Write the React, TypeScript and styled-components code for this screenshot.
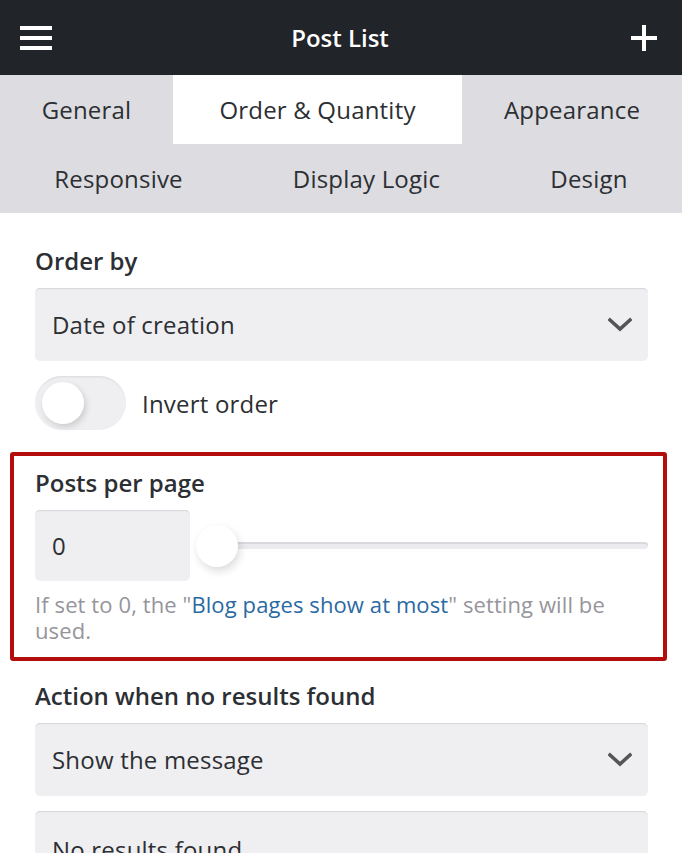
import React from "react";
import styled, { createGlobalStyle } from "styled-components";

const Global = createGlobalStyle`
  html, body { margin: 0; padding: 0; background: #fff; }
  body { font-family: "Open Sans", "Noto Sans", sans-serif; color: #2c2f33; }
  * { box-sizing: border-box; }
`;

const Page = styled.div`
  width: 682px;
  height: 853px;
  overflow: hidden;
  background: #fff;
`;

const Header = styled.header`
  height: 75px;
  background: #212529;
  display: flex;
  align-items: center;
  justify-content: space-between;
  padding: 0 22px 0 20px;
  color: #fff;
`;

const Title = styled.h1`
  margin: 0;
  font-size: 24px;
  font-weight: 600;
  letter-spacing: 0;
`;

const IconBtn = styled.div`
  width: 32px;
  height: 32px;
  display: flex;
  align-items: center;
  justify-content: center;
`;

const Tabs = styled.nav`
  background: #dddce0;
  display: flex;
  flex-direction: column;
`;

const TabRow = styled.div`
  display: flex;
  height: 69px;
`;

const Tab = styled.div<{ $active?: boolean; $grow: number }>`
  flex: ${(p) => p.$grow} 1 0;
  display: flex;
  align-items: center;
  justify-content: center;
  font-size: 24px;
  letter-spacing: 0.2px;
  color: #2c2f33;
  background: ${(p) => (p.$active ? "#fff" : "transparent")};
`;

const Content = styled.div`
  padding: 32px 34px 0 35px;
  display: flex;
  flex-direction: column;
`;

const Label = styled.div<{ $mt?: number }>`
  font-size: 24px;
  font-weight: 600;
  line-height: 32px;
  margin-top: ${(p) => p.$mt ?? 0}px;
  color: #2c2f33;
`;

const Field = styled.div`
  margin-top: 11px;
  height: 73px;
  background: #efeef1;
  border-radius: 5px;
  box-shadow: inset 0 2px 1px -1px #d6d5da;
  display: flex;
  align-items: center;
  justify-content: space-between;
  padding: 0 16px 0 17px;
  font-size: 24px;
  letter-spacing: 0.2px;
  color: #2c2f33;
`;

const TextArea = styled(Field)`
  margin-top: 15px;
  align-items: flex-start;
  padding-top: 22px;
  height: 120px;
`;

const ToggleRow = styled.div`
  margin-top: 15px;
  display: flex;
  align-items: center;
  gap: 16px;
  font-size: 24px;
  letter-spacing: 0.2px;
`;

const Switch = styled.div`
  width: 91px;
  height: 54px;
  border-radius: 27px;
  background: #efeef1;
  box-shadow: inset 0 2px 2px -1px #d9d8dd;
  display: flex;
  align-items: center;
  padding-left: 7px;
`;

const Knob = styled.div`
  width: 42px;
  height: 42px;
  border-radius: 50%;
  background: #fff;
  box-shadow: 2px 3px 6px rgba(0, 0, 0, 0.15);
`;

const Highlight = styled.section`
  margin: 22px -19px 0 -25px;
  border: 4px solid #b30d0d;
  border-radius: 3px;
  padding: 11px 15px 14px 21px;
`;

const SliderRow = styled.div`
  margin-top: 11px;
  display: flex;
  align-items: center;
`;

const NumberBox = styled.div`
  width: 155px;
  height: 71px;
  background: #efeef1;
  border-radius: 5px;
  box-shadow: inset 0 2px 1px -1px #d6d5da;
  display: flex;
  align-items: center;
  padding-left: 17px;
  font-size: 24px;
`;

const Track = styled.div`
  flex: 1;
  margin-left: 6px;
  height: 7px;
  border-radius: 4px;
  background: #ebeaee;
  box-shadow: inset 0 2px 0 #d9d8dc;
  position: relative;
  display: flex;
  align-items: center;
`;

const Thumb = styled.div`
  position: absolute;
  left: 0;
  top: 50%;
  transform: translateY(-50%);
  width: 42px;
  height: 42px;
  border-radius: 50%;
  background: #fff;
  box-shadow: 2px 4px 8px rgba(0, 0, 0, 0.14);
`;

const Help = styled.p`
  margin: 10px 0 0;
  font-size: 22px;
  line-height: 26px;
  letter-spacing: 0.1px;
  color: #96959b;
`;

const Link = styled.span`
  color: #2a6aa3;
`;

const Chevron = () => (
  <svg width="24" height="16" viewBox="0 0 24 16">
    <path d="M2 3 L12 12 L22 3" fill="none" stroke="#555" strokeWidth="3.6" strokeLinecap="square" />
  </svg>
);

export default function App() {
  return (
    <Page>
      <Global />
      <Header>
        <IconBtn>
          <svg width="32" height="24" viewBox="0 0 32 24">
            <rect x="0" y="0" width="32" height="4" fill="#fff" />
            <rect x="0" y="10" width="32" height="4" fill="#fff" />
            <rect x="0" y="20" width="32" height="4" fill="#fff" />
          </svg>
        </IconBtn>
        <Title>Post List</Title>
        <IconBtn>
          <svg width="26" height="26" viewBox="0 0 26 26">
            <rect x="11" y="0" width="4" height="26" fill="#fff" />
            <rect x="0" y="11" width="26" height="4" fill="#fff" />
          </svg>
        </IconBtn>
      </Header>
      <Tabs>
        <TabRow>
          <Tab $grow={173}>General</Tab>
          <Tab $grow={289} $active>Order &amp; Quantity</Tab>
          <Tab $grow={220}>Appearance</Tab>
        </TabRow>
        <TabRow>
          <Tab $grow={237}>Responsive</Tab>
          <Tab $grow={259}>Display Logic</Tab>
          <Tab $grow={186}>Design</Tab>
        </TabRow>
      </Tabs>
      <Content>
        <Label>Order by</Label>
        <Field>
          <span>Date of creation</span>
          <Chevron />
        </Field>
        <ToggleRow>
          <Switch>
            <Knob />
          </Switch>
          <span>Invert order</span>
        </ToggleRow>
        <Highlight>
          <Label>Posts per page</Label>
          <SliderRow>
            <NumberBox>0</NumberBox>
            <Track>
              <Thumb />
            </Track>
          </SliderRow>
          <Help>
            If set to 0, the "<Link>Blog pages show at most</Link>" setting will be used.
          </Help>
        </Highlight>
        <Label $mt={19}>Action when no results found</Label>
        <Field>
          <span>Show the message</span>
          <Chevron />
        </Field>
        <TextArea>
          <span>No results found</span>
        </TextArea>
      </Content>
    </Page>
  );
}
